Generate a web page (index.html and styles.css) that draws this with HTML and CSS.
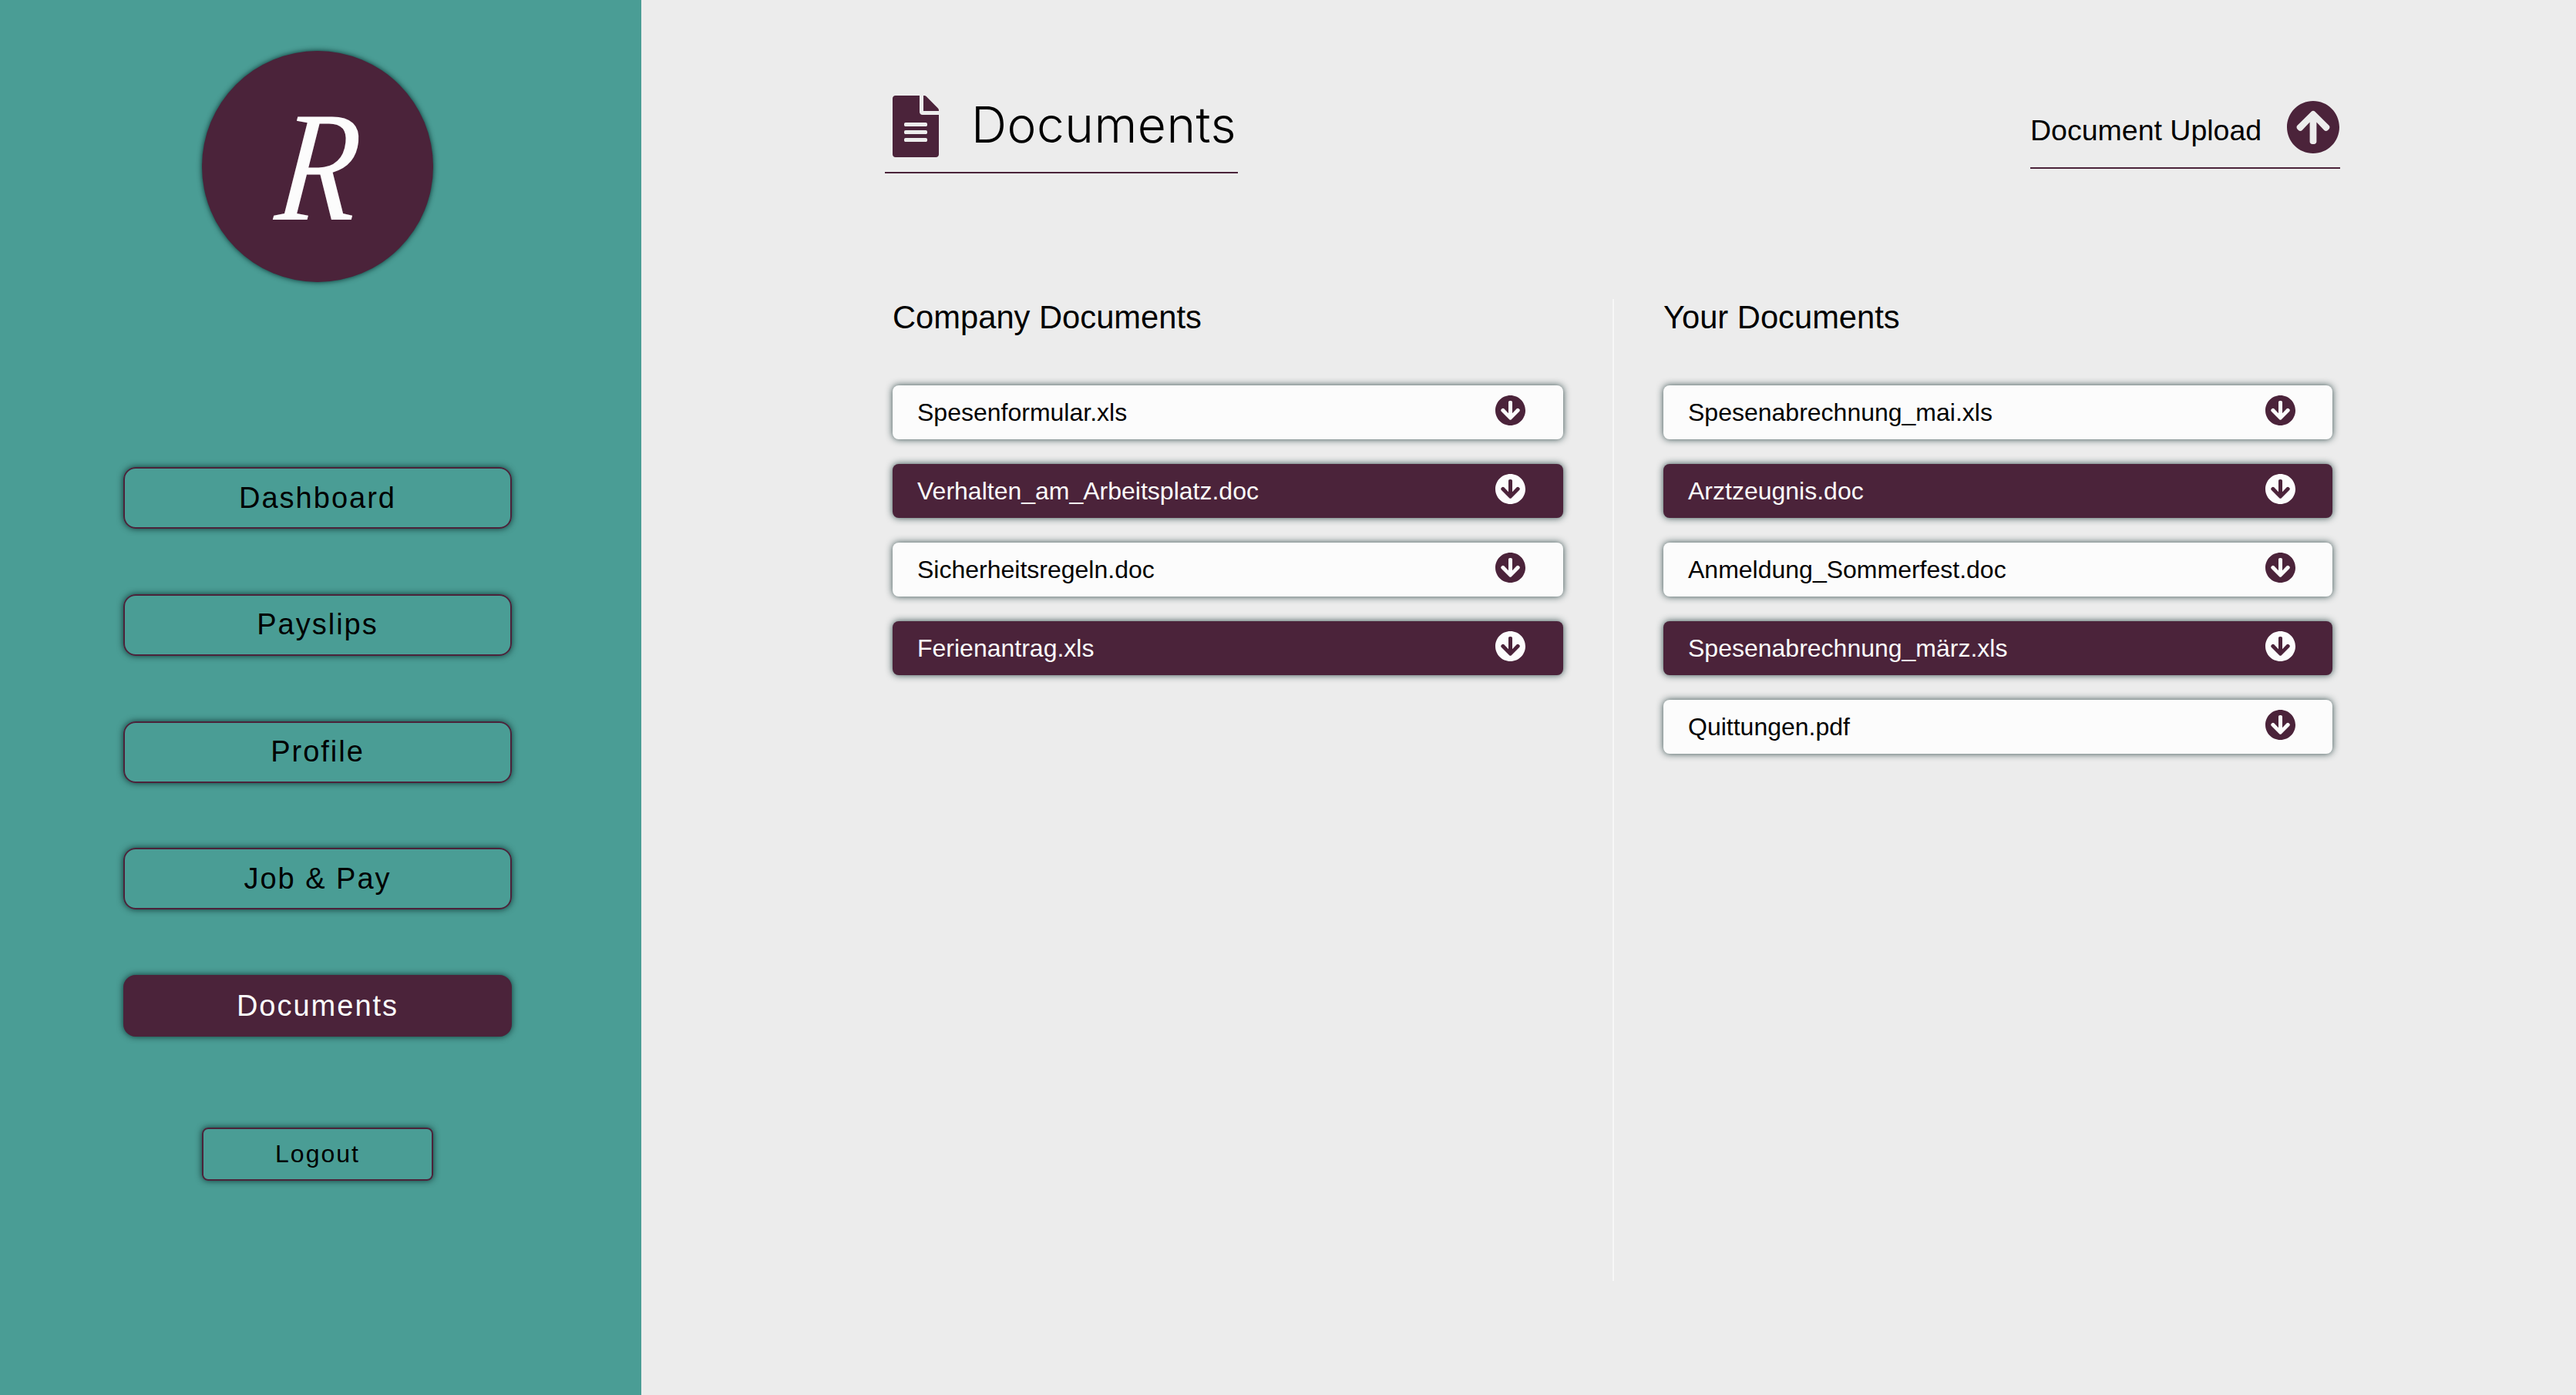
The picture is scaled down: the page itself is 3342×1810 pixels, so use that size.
FILE: index.html
```html
<!DOCTYPE html>
<html lang="en">
<head>
<meta charset="utf-8">
<title>Documents</title>
<link rel="stylesheet" href="styles.css">
</head>
<body>
<div class="app">
  <aside class="sidebar">
    <div class="logo"><span class="logo-letter">R</span></div>
    <nav class="nav">
      <a class="nav-btn">Dashboard</a>
      <a class="nav-btn">Payslips</a>
      <a class="nav-btn">Profile</a>
      <a class="nav-btn">Job &amp; Pay</a>
      <a class="nav-btn active">Documents</a>
    </nav>
    <a class="logout">Logout</a>
  </aside>
  <main class="main">
    <header class="header">
      <div class="title-box">
        <svg class="title-icon" viewBox="0 0 384 512"><path d="M224 136V0H24C10.7 0 0 10.7 0 24v464c0 13.3 10.7 24 24 24h336c13.3 0 24-10.7 24-24V160H248c-13.2 0-24-10.8-24-24zm64 236c0 6.6-5.4 12-12 12H108c-6.6 0-12-5.4-12-12v-8c0-6.6 5.4-12 12-12h168c6.6 0 12 5.4 12 12v8zm0-64c0 6.6-5.4 12-12 12H108c-6.6 0-12-5.4-12-12v-8c0-6.6 5.4-12 12-12h168c6.6 0 12 5.4 12 12v8zm0-72v8c0 6.6-5.4 12-12 12H108c-6.6 0-12-5.4-12-12v-8c0-6.6 5.4-12 12-12h168c6.6 0 12 5.4 12 12zm96-114.1v6.1H256V0h6.1c6.4 0 12.5 2.5 17 7l97.9 98c4.5 4.5 7 10.6 7 16.9z"/></svg>
        <h1 class="title">Documents</h1>
      </div>
      <div class="upload">
        <span class="upload-label">Document Upload</span>
        <svg class="upload-icon" viewBox="8 8 496 496"><path d="M8 256C8 119 119 8 256 8s248 111 248 248-111 248-248 248S8 393 8 256zm143.6 28.9l72.4-75.5V392c0 13.3 10.7 24 24 24h16c13.3 0 24-10.7 24-24V209.4l72.4 75.5c9.3 9.7 24.8 9.9 34.3.4l10.9-11c9.4-9.4 9.4-24.6 0-33.9L273 107.7c-9.4-9.4-24.6-9.4-33.9 0L106.3 240.4c-9.4 9.4-9.4 24.6 0 33.9l10.9 11c9.6 9.5 25.1 9.3 34.4-.4z"/></svg>
      </div>
    </header>
    <section class="columns">
      <div class="column">
        <h2 class="col-title">Company Documents</h2>
        <ul class="rows">
          <li class="row"><span>Spesenformular.xls</span><svg class="dl" viewBox="8 8 496 496"><path d="M504 256c0 137-111 248-248 248S8 393 8 256 119 8 256 8s248 111 248 248zm-143.6-28.9L288 302.6V120c0-13.3-10.7-24-24-24h-16c-13.3 0-24 10.7-24 24v182.6l-72.4-75.5c-9.3-9.7-24.8-9.9-34.3-.4l-10.9 11c-9.4 9.4-9.4 24.6 0 33.9L239 404.3c9.4 9.4 24.6 9.4 33.9 0l132.7-132.7c9.4-9.4 9.4-24.6 0-33.9l-10.9-11c-9.6-9.5-25.1-9.3-34.4.4z"/></svg></li>
          <li class="row dark"><span>Verhalten_am_Arbeitsplatz.doc</span><svg class="dl" viewBox="8 8 496 496"><path d="M504 256c0 137-111 248-248 248S8 393 8 256 119 8 256 8s248 111 248 248zm-143.6-28.9L288 302.6V120c0-13.3-10.7-24-24-24h-16c-13.3 0-24 10.7-24 24v182.6l-72.4-75.5c-9.3-9.7-24.8-9.9-34.3-.4l-10.9 11c-9.4 9.4-9.4 24.6 0 33.9L239 404.3c9.4 9.4 24.6 9.4 33.9 0l132.7-132.7c9.4-9.4 9.4-24.6 0-33.9l-10.9-11c-9.6-9.5-25.1-9.3-34.4.4z"/></svg></li>
          <li class="row"><span>Sicherheitsregeln.doc</span><svg class="dl" viewBox="8 8 496 496"><path d="M504 256c0 137-111 248-248 248S8 393 8 256 119 8 256 8s248 111 248 248zm-143.6-28.9L288 302.6V120c0-13.3-10.7-24-24-24h-16c-13.3 0-24 10.7-24 24v182.6l-72.4-75.5c-9.3-9.7-24.8-9.9-34.3-.4l-10.9 11c-9.4 9.4-9.4 24.6 0 33.9L239 404.3c9.4 9.4 24.6 9.4 33.9 0l132.7-132.7c9.4-9.4 9.4-24.6 0-33.9l-10.9-11c-9.6-9.5-25.1-9.3-34.4.4z"/></svg></li>
          <li class="row dark"><span>Ferienantrag.xls</span><svg class="dl" viewBox="8 8 496 496"><path d="M504 256c0 137-111 248-248 248S8 393 8 256 119 8 256 8s248 111 248 248zm-143.6-28.9L288 302.6V120c0-13.3-10.7-24-24-24h-16c-13.3 0-24 10.7-24 24v182.6l-72.4-75.5c-9.3-9.7-24.8-9.9-34.3-.4l-10.9 11c-9.4 9.4-9.4 24.6 0 33.9L239 404.3c9.4 9.4 24.6 9.4 33.9 0l132.7-132.7c9.4-9.4 9.4-24.6 0-33.9l-10.9-11c-9.6-9.5-25.1-9.3-34.4.4z"/></svg></li>
        </ul>
      </div>
      <div class="divider"></div>
      <div class="column your">
        <h2 class="col-title">Your Documents</h2>
        <ul class="rows">
          <li class="row"><span>Spesenabrechnung_mai.xls</span><svg class="dl" viewBox="8 8 496 496"><path d="M504 256c0 137-111 248-248 248S8 393 8 256 119 8 256 8s248 111 248 248zm-143.6-28.9L288 302.6V120c0-13.3-10.7-24-24-24h-16c-13.3 0-24 10.7-24 24v182.6l-72.4-75.5c-9.3-9.7-24.8-9.9-34.3-.4l-10.9 11c-9.4 9.4-9.4 24.6 0 33.9L239 404.3c9.4 9.4 24.6 9.4 33.9 0l132.7-132.7c9.4-9.4 9.4-24.6 0-33.9l-10.9-11c-9.6-9.5-25.1-9.3-34.4.4z"/></svg></li>
          <li class="row dark"><span>Arztzeugnis.doc</span><svg class="dl" viewBox="8 8 496 496"><path d="M504 256c0 137-111 248-248 248S8 393 8 256 119 8 256 8s248 111 248 248zm-143.6-28.9L288 302.6V120c0-13.3-10.7-24-24-24h-16c-13.3 0-24 10.7-24 24v182.6l-72.4-75.5c-9.3-9.7-24.8-9.9-34.3-.4l-10.9 11c-9.4 9.4-9.4 24.6 0 33.9L239 404.3c9.4 9.4 24.6 9.4 33.9 0l132.7-132.7c9.4-9.4 9.4-24.6 0-33.9l-10.9-11c-9.6-9.5-25.1-9.3-34.4.4z"/></svg></li>
          <li class="row"><span>Anmeldung_Sommerfest.doc</span><svg class="dl" viewBox="8 8 496 496"><path d="M504 256c0 137-111 248-248 248S8 393 8 256 119 8 256 8s248 111 248 248zm-143.6-28.9L288 302.6V120c0-13.3-10.7-24-24-24h-16c-13.3 0-24 10.7-24 24v182.6l-72.4-75.5c-9.3-9.7-24.8-9.9-34.3-.4l-10.9 11c-9.4 9.4-9.4 24.6 0 33.9L239 404.3c9.4 9.4 24.6 9.4 33.9 0l132.7-132.7c9.4-9.4 9.4-24.6 0-33.9l-10.9-11c-9.6-9.5-25.1-9.3-34.4.4z"/></svg></li>
          <li class="row dark"><span>Spesenabrechnung_märz.xls</span><svg class="dl" viewBox="8 8 496 496"><path d="M504 256c0 137-111 248-248 248S8 393 8 256 119 8 256 8s248 111 248 248zm-143.6-28.9L288 302.6V120c0-13.3-10.7-24-24-24h-16c-13.3 0-24 10.7-24 24v182.6l-72.4-75.5c-9.3-9.7-24.8-9.9-34.3-.4l-10.9 11c-9.4 9.4-9.4 24.6 0 33.9L239 404.3c9.4 9.4 24.6 9.4 33.9 0l132.7-132.7c9.4-9.4 9.4-24.6 0-33.9l-10.9-11c-9.6-9.5-25.1-9.3-34.4.4z"/></svg></li>
          <li class="row"><span>Quittungen.pdf</span><svg class="dl" viewBox="8 8 496 496"><path d="M504 256c0 137-111 248-248 248S8 393 8 256 119 8 256 8s248 111 248 248zm-143.6-28.9L288 302.6V120c0-13.3-10.7-24-24-24h-16c-13.3 0-24 10.7-24 24v182.6l-72.4-75.5c-9.3-9.7-24.8-9.9-34.3-.4l-10.9 11c-9.4 9.4-9.4 24.6 0 33.9L239 404.3c9.4 9.4 24.6 9.4 33.9 0l132.7-132.7c9.4-9.4 9.4-24.6 0-33.9l-10.9-11c-9.6-9.5-25.1-9.3-34.4.4z"/></svg></li>
        </ul>
      </div>
    </section>
  </main>
</div>
</body>
</html>
```

FILE: styles.css
```css
* { box-sizing: border-box; }
html, body { margin: 0; height: 100%; overflow: hidden; }
body {
  background: #ececec;
  color: #000;
  font-family: "Liberation Sans", Arial, sans-serif;
}
.app { display: flex; height: 1810px; }

.sidebar {
  width: 832px;
  flex: none;
  background: #4a9d95;
  display: flex;
  flex-direction: column;
  align-items: center;
  padding: 66px 8px 0 0;
}
.logo {
  width: 300px;
  height: 300px;
  border-radius: 50%;
  background: #4b233a;
  box-shadow: 0 0 7px rgba(0, 35, 35, .9);
  color: #fcfcfc;
  display: flex;
  align-items: center;
  justify-content: center;
}
.logo-letter {
  font-family: "Liberation Serif", serif;
  font-style: italic;
  font-size: 204px;
  line-height: 1;
  transform: translate(2px, 0) scaleX(.84) skewX(-7deg);
}
.nav {
  margin-top: 240px;
  display: flex;
  flex-direction: column;
  gap: 84.8px;
}
.nav-btn {
  width: 504px;
  height: 80px;
  border: 2px solid #4b233a;
  border-radius: 16px;
  box-shadow: 0 0 8px rgba(0, 30, 30, .8);
  display: flex;
  align-items: center;
  justify-content: center;
  font-size: 38px;
  letter-spacing: 2px;
}
.nav-btn.active {
  background: #4b233a;
  color: #fcfcfc;
}
.logout {
  margin-top: 118px;
  width: 300px;
  height: 69px;
  border: 2px solid #4b233a;
  border-radius: 8px;
  box-shadow: 0 0 8px rgba(0, 30, 30, .8);
  display: flex;
  align-items: center;
  justify-content: center;
  font-size: 32px;
  letter-spacing: 2px;
}

.main {
  flex: 1;
  min-width: 0;
  padding: 124px 0 0 316px;
}
.header {
  width: 1888px;
  height: 264px;
  display: flex;
  justify-content: space-between;
  align-items: flex-start;
}
.title-box {
  width: 458px;
  height: 101px;
  padding-left: 10px;
  border-bottom: 2px solid #4b233a;
  display: flex;
  align-items: flex-start;
  gap: 42px;
}
.title-icon { width: 60px; height: 80px; fill: #4b233a; flex: none; }
.title {
  margin: 2px 0 0;
  font-family: Inter, "Liberation Sans", sans-serif;
  font-weight: 300;
  font-size: 64px;
  line-height: 72px;
  letter-spacing: .5px;
}
.upload {
  margin-top: 7px;
  width: 402px;
  height: 88px;
  border-bottom: 2px solid #4b233a;
  display: flex;
  align-items: flex-start;
  justify-content: space-between;
}
.upload-label {
  font-size: 37.5px;
  line-height: 44px;
  margin-top: 16px;
}
.upload-icon { width: 68px; height: 68px; fill: #4b233a; margin-right: 1px; }

.columns {
  padding-left: 10px;
  display: grid;
  grid-template-columns: 870px 2px 868px;
  column-gap: 64px;
}
.divider { height: 1274px; background: #f7f7f7; }
.col-title {
  margin: 0 0 64px;
  font-weight: 400;
  font-size: 41.7px;
  line-height: 48px;
}
.rows {
  list-style: none;
  margin: 0;
  padding: 0;
  display: flex;
  flex-direction: column;
  gap: 32px;
}
.row {
  height: 70px;
  padding: 0 49px 0 32px;
  border-radius: 8px;
  background: #fcfcfc;
  box-shadow: 0 0 10px rgba(40, 65, 65, .95);
  display: flex;
  align-items: center;
  justify-content: space-between;
  font-size: 32px;
}
.your .row { padding-right: 48px; }
.dl { width: 39px; height: 39px; fill: #4b233a; margin-bottom: 6px; }
.row.dark { background: #4b233a; color: #fcfcfc; }
.row.dark .dl { fill: #fcfcfc; }
```
